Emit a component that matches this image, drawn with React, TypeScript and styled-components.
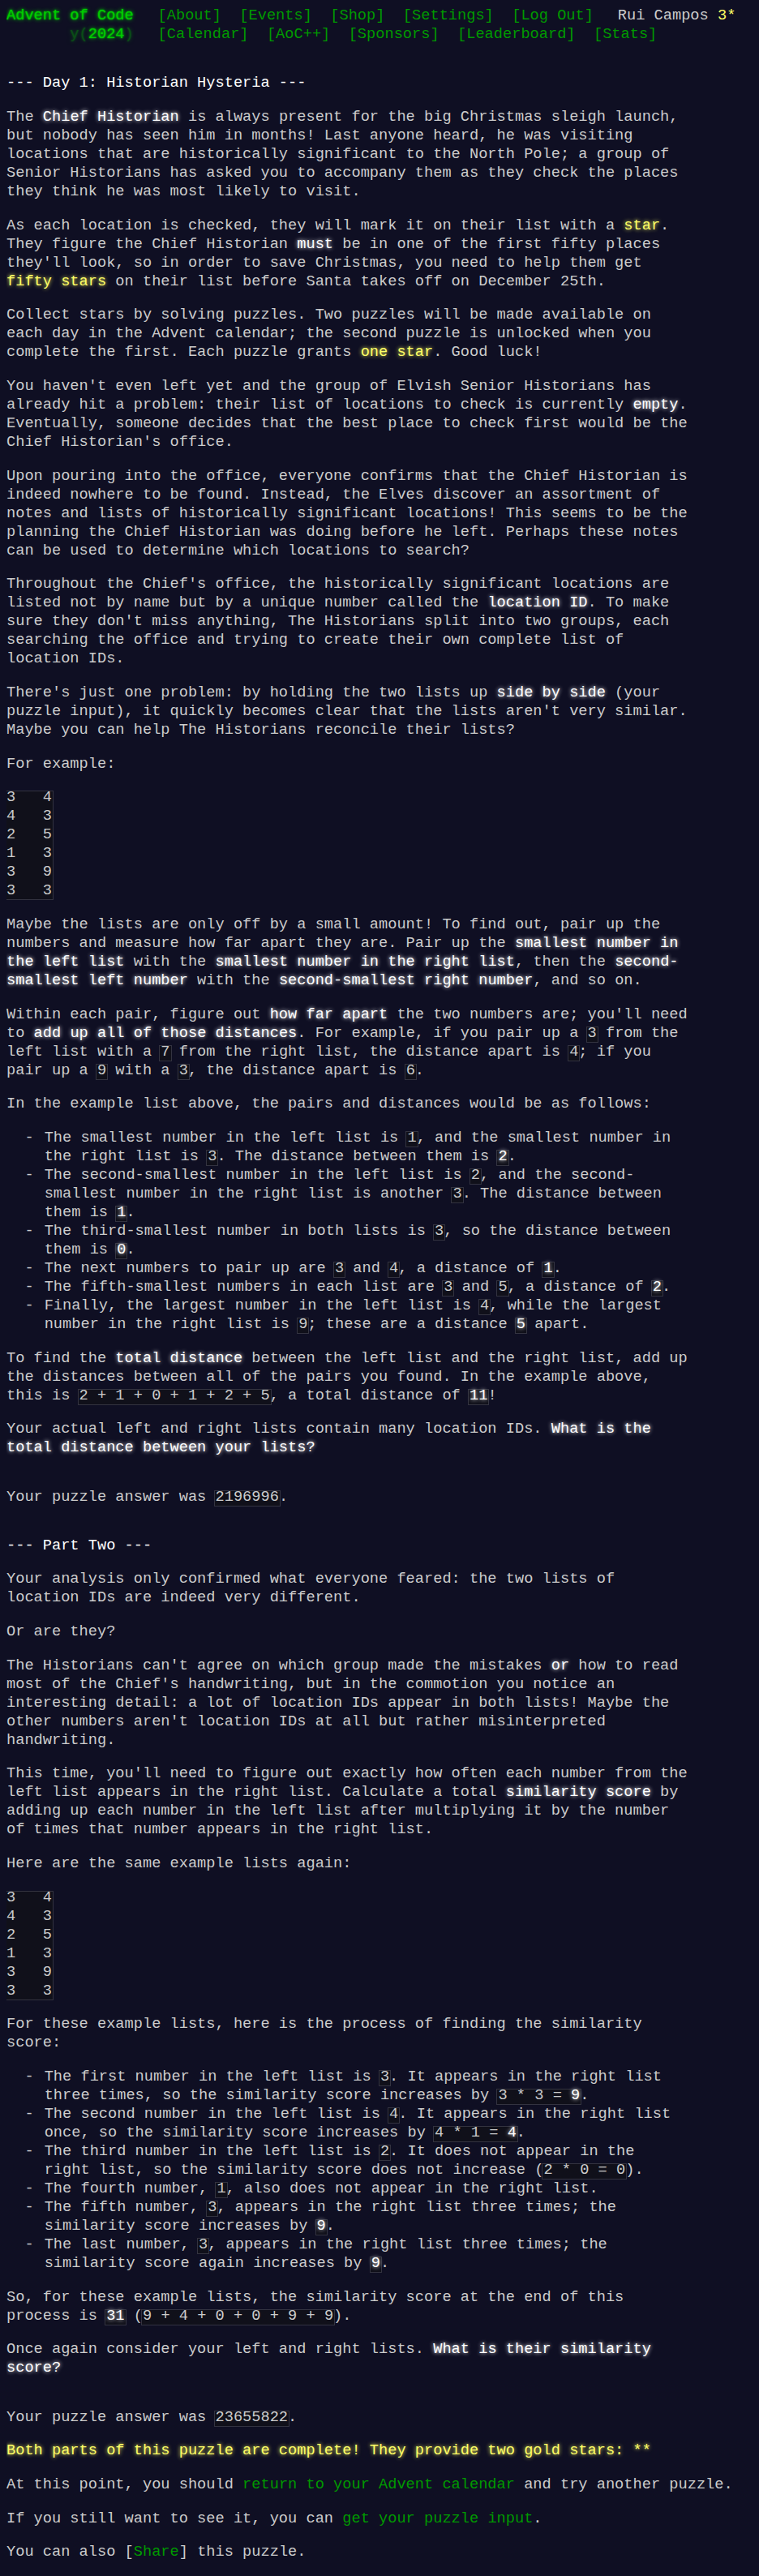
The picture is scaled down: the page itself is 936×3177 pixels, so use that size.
import styled, { createGlobalStyle, css } from 'styled-components';

const GlobalStyle = createGlobalStyle`
  html, body {
    background: #0f0f23;
  }
  body {
    margin: 8px;
    color: #cccccc;
    font-family: "Liberation Mono", "DejaVu Sans Mono", monospace;
    font-size: 18.667px;
    line-height: 23px;
  }
`;

const Header = styled.header`
  white-space: nowrap;
  margin-bottom: 2em;
`;

const HeaderRow = styled.div`
  display: flex;
  align-items: baseline;
`;

const Title = styled.h1`
  flex: none;
  width: 14ch;
  margin: 0;
  padding-right: 1em;
  font-size: 1em;
  font-weight: normal;
  color: #00cc00;
  text-shadow: 0 0 2px #00cc00, 0 0 5px #00cc00;
`;

const TitleWrap = styled.span`
  opacity: 0.33;
  white-space: pre;
`;

const NavList = styled.ul`
  display: flex;
  list-style: none;
  margin: 0;
  padding: 0;
`;

const NavItem = styled.li`
  padding: 0 0.6em;
`;

const Link = styled.a`
  color: #009900;
  text-decoration: none;
  white-space: nowrap;
  cursor: pointer;
  &:hover {
    color: #99ff99;
  }
`;

const User = styled.div`
  padding-left: 1em;
  color: #cccccc;
`;

const StarCount = styled.span`
  color: #ffff66;
`;

const Main = styled.main`
  display: block;
`;

// 45em wide, plus a pixel so 75 glyphs still fit on a line
const Article = styled.article`
  width: calc(45em + 1px);
  margin: 2em 0;
`;

const H2 = styled.h2`
  margin: 1em 0;
  font-size: 1em;
  font-weight: normal;
  color: #ffffff;
  white-space: nowrap;
`;

const P = styled.p`
  margin: 1em 0;
`;

const Em = styled.em<{ $star?: boolean }>`
  font-style: normal;
  font-weight: normal;
  color: #ffffff;
  text-shadow: 0 0 5px #ffffff;
  ${({ $star }) =>
    $star &&
    css`
      color: #ffff66;
      text-shadow: 0 0 5px #ffff66;
    `}
`;

const Code = styled.code`
  position: relative;
  z-index: 0;
  display: inline-block;
  margin: 0;
  padding: 0;
  font: inherit;
  white-space: pre;
  &::before {
    content: "";
    position: absolute;
    z-index: -1;
    left: -2px;
    right: -2px;
    top: 3px;
    bottom: 0;
    border: 1px solid #333340;
    background: #10101a;
  }
`;

const Pre = styled.pre`
  margin: 1em 0;
  font: inherit;
`;

const List = styled.ul`
  list-style: none;
  margin: 1em 0;
  padding: 0;
`;

const Item = styled.li`
  position: relative;
  padding-left: 2.5em;
  &::before {
    content: "\\00a0\\00a0-\\00a0";
    position: absolute;
    left: 0;
  }
`;

const Success = styled.p`
  margin: 1em 0;
  color: #ffff66;
  text-shadow: 0 0 5px #ffff66;
`;

const topNav = ['[About]', '[Events]', '[Shop]', '[Settings]', '[Log Out]'];
const eventNav = ['[Calendar]', '[AoC++]', '[Sponsors]', '[Leaderboard]', '[Stats]'];

const example = '3   4\n4   3\n2   5\n1   3\n3   9\n3   3';

const Nav = ({ items }: { items: string[] }) => (
  <nav>
    <NavList>
      {items.map((label) => (
        <NavItem key={label}>
          <Link>{label}</Link>
        </NavItem>
      ))}
    </NavList>
  </nav>
);

const App = () => {
  return (
    <>
      <GlobalStyle />
      <Header>
        <HeaderRow>
          <Title>Advent of Code</Title>
          <Nav items={topNav} />
          <User>
            Rui Campos <StarCount>3*</StarCount>
          </User>
        </HeaderRow>
        <HeaderRow>
          <Title>
            <TitleWrap>{'       y('}</TitleWrap>2024<TitleWrap>)</TitleWrap>
          </Title>
          <Nav items={eventNav} />
        </HeaderRow>
      </Header>

      <Main>
        <Article>
          <H2>--- Day 1: Historian Hysteria ---</H2>
          <P>
            The <Em>Chief Historian</Em> is always present for the big Christmas sleigh launch, but
            nobody has seen him in months! Last anyone heard, he was visiting locations that are
            historically significant to the North Pole; a group of Senior Historians has asked you to
            accompany them as they check the places they think he was most likely to visit.
          </P>
          <P>
            As each location is checked, they will mark it on their list with a <Em $star>star</Em>.
            They figure the Chief Historian <Em>must</Em> be in one of the first fifty places they'll
            look, so in order to save Christmas, you need to help them get <Em $star>fifty stars</Em>{' '}
            on their list before Santa takes off on December 25th.
          </P>
          <P>
            Collect stars by solving puzzles. Two puzzles will be made available on each day in the
            Advent calendar; the second puzzle is unlocked when you complete the first. Each puzzle
            grants <Em $star>one star</Em>. Good luck!
          </P>
          <P>
            You haven't even left yet and the group of Elvish Senior Historians has already hit a
            problem: their list of locations to check is currently <Em>empty</Em>. Eventually, someone
            decides that the best place to check first would be the Chief Historian's office.
          </P>
          <P>
            Upon pouring into the office, everyone confirms that the Chief Historian is indeed nowhere
            to be found. Instead, the Elves discover an assortment of notes and lists of historically
            significant locations! This seems to be the planning the Chief Historian was doing before
            he left. Perhaps these notes can be used to determine which locations to search?
          </P>
          <P>
            Throughout the Chief's office, the historically significant locations are listed not by
            name but by a unique number called the <Em>location ID</Em>. To make sure they don't miss
            anything, The Historians split into two groups, each searching the office and trying to
            create their own complete list of location IDs.
          </P>
          <P>
            There's just one problem: by holding the two lists up <Em>side by side</Em> (your puzzle
            input), it quickly becomes clear that the lists aren't very similar. Maybe you can help The
            Historians reconcile their lists?
          </P>
          <P>For example:</P>
          <Pre>
            <Code>{example}</Code>
          </Pre>
          <P>
            Maybe the lists are only off by a small amount! To find out, pair up the numbers and
            measure how far apart they are. Pair up the <Em>smallest number in the left list</Em> with
            the <Em>smallest number in the right list</Em>, then the{' '}
            <Em>second-smallest left number</Em> with the <Em>second-smallest right number</Em>, and so
            on.
          </P>
          <P>
            Within each pair, figure out <Em>how far apart</Em> the two numbers are; you'll need to{' '}
            <Em>add up all of those distances</Em>. For example, if you pair up a <Code>3</Code> from
            the left list with a <Code>7</Code> from the right list, the distance apart is{' '}
            <Code>4</Code>; if you pair up a <Code>9</Code> with a <Code>3</Code>, the distance apart
            is <Code>6</Code>.
          </P>
          <P>In the example list above, the pairs and distances would be as follows:</P>
          <List>
            <Item>
              The smallest number in the left list is <Code>1</Code>, and the smallest number in the
              right list is <Code>3</Code>. The distance between them is{' '}
              <Code>
                <Em>2</Em>
              </Code>
              .
            </Item>
            <Item>
              The second-smallest number in the left list is <Code>2</Code>, and the second-smallest
              number in the right list is another <Code>3</Code>. The distance between them is{' '}
              <Code>
                <Em>1</Em>
              </Code>
              .
            </Item>
            <Item>
              The third-smallest number in both lists is <Code>3</Code>, so the distance between them
              is{' '}
              <Code>
                <Em>0</Em>
              </Code>
              .
            </Item>
            <Item>
              The next numbers to pair up are <Code>3</Code> and <Code>4</Code>, a distance of{' '}
              <Code>
                <Em>1</Em>
              </Code>
              .
            </Item>
            <Item>
              The fifth-smallest numbers in each list are <Code>3</Code> and <Code>5</Code>, a
              distance of{' '}
              <Code>
                <Em>2</Em>
              </Code>
              .
            </Item>
            <Item>
              Finally, the largest number in the left list is <Code>4</Code>, while the largest
              number in the right list is <Code>9</Code>; these are a distance{' '}
              <Code>
                <Em>5</Em>
              </Code>{' '}
              apart.
            </Item>
          </List>
          <P>
            To find the <Em>total distance</Em> between the left list and the right list, add up the
            distances between all of the pairs you found. In the example above, this is{' '}
            <Code>2 + 1 + 0 + 1 + 2 + 5</Code>, a total distance of{' '}
            <Code>
              <Em>11</Em>
            </Code>
            !
          </P>
          <P>
            Your actual left and right lists contain many location IDs.{' '}
            <Em>What is the total distance between your lists?</Em>
          </P>
        </Article>
        <P>
          Your puzzle answer was <Code>2196996</Code>.
        </P>

        <Article>
          <H2>--- Part Two ---</H2>
          <P>
            Your analysis only confirmed what everyone feared: the two lists of location IDs are
            indeed very different.
          </P>
          <P>Or are they?</P>
          <P>
            The Historians can't agree on which group made the mistakes <Em>or</Em> how to read most
            of the Chief's handwriting, but in the commotion you notice an interesting detail: a lot
            of location IDs appear in both lists! Maybe the other numbers aren't location IDs at all
            but rather misinterpreted handwriting.
          </P>
          <P>
            This time, you'll need to figure out exactly how often each number from the left list
            appears in the right list. Calculate a total <Em>similarity score</Em> by adding up each
            number in the left list after multiplying it by the number of times that number appears in
            the right list.
          </P>
          <P>Here are the same example lists again:</P>
          <Pre>
            <Code>{example}</Code>
          </Pre>
          <P>For these example lists, here is the process of finding the similarity score:</P>
          <List>
            <Item>
              The first number in the left list is <Code>3</Code>. It appears in the right list three
              times, so the similarity score increases by{' '}
              <Code>
                3 * 3 = <Em>9</Em>
              </Code>
              .
            </Item>
            <Item>
              The second number in the left list is <Code>4</Code>. It appears in the right list once,
              so the similarity score increases by{' '}
              <Code>
                4 * 1 = <Em>4</Em>
              </Code>
              .
            </Item>
            <Item>
              The third number in the left list is <Code>2</Code>. It does not appear in the right
              list, so the similarity score does not increase (<Code>2 * 0 = 0</Code>).
            </Item>
            <Item>
              The fourth number, <Code>1</Code>, also does not appear in the right list.
            </Item>
            <Item>
              The fifth number, <Code>3</Code>, appears in the right list three times; the similarity
              score increases by{' '}
              <Code>
                <Em>9</Em>
              </Code>
              .
            </Item>
            <Item>
              The last number, <Code>3</Code>, appears in the right list three times; the similarity
              score again increases by{' '}
              <Code>
                <Em>9</Em>
              </Code>
              .
            </Item>
          </List>
          <P>
            So, for these example lists, the similarity score at the end of this process is{' '}
            <Code>
              <Em>31</Em>
            </Code>{' '}
            (<Code>9 + 4 + 0 + 0 + 9 + 9</Code>).
          </P>
          <P>
            Once again consider your left and right lists. <Em>What is their similarity score?</Em>
          </P>
        </Article>
        <P>
          Your puzzle answer was <Code>23655822</Code>.
        </P>
        <Success>Both parts of this puzzle are complete! They provide two gold stars: **</Success>
        <P>
          At this point, you should <Link>return to your Advent calendar</Link> and try another
          puzzle.
        </P>
        <P>
          If you still want to see it, you can <Link>get your puzzle input</Link>.
        </P>
        <P>
          You can also <span>[<Link>Share</Link>]</span> this puzzle.
        </P>
      </Main>
    </>
  );
};

export default App;
